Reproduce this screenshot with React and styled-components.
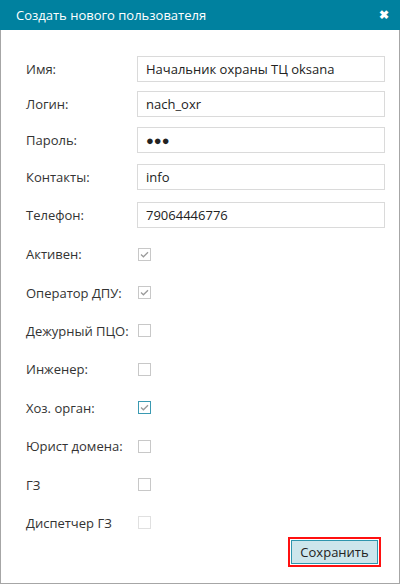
import React from 'react';
import styled, { createGlobalStyle } from 'styled-components';

const GlobalStyle = createGlobalStyle`
  html, body {
    margin: 0;
    padding: 0;
    background: #fff;
  }
  body {
    font-family: "Open Sans", "Noto Sans", sans-serif;
  }
`;

const Dialog = styled.div`
  width: 400px;
  height: 584px;
  box-sizing: border-box;
  display: flex;
  flex-direction: column;
`;

const TitleBar = styled.div`
  height: 30px;
  flex: 0 0 30px;
  background: #00819f;
  color: #fff;
  display: flex;
  align-items: center;
  justify-content: space-between;
  padding: 0 11px 0 16px;
  font-size: 13px;
`;

const Close = styled.span`
  font-size: 12px;
  font-weight: bold;
  line-height: 1;
  cursor: pointer;
`;

const Body = styled.div`
  flex: 1;
  border: 1px solid #a6a6a6;
  border-top: none;
  padding: 22px 15px 0 25px;
  display: flex;
  flex-direction: column;
`;

const Row = styled.div`
  display: grid;
  grid-template-columns: 111px 248px;
  align-items: center;
  height: ${p => p.$height}px;
`;

const Label = styled.label`
  font-size: 13px;
  color: #333;
  white-space: nowrap;
`;

const Input = styled.input`
  box-sizing: border-box;
  height: 26px;
  width: 248px;
  border: 1px solid #dadada;
  padding: 0 8px;
  font-family: inherit;
  font-size: 13px;
  color: #222;
  outline: none;
  background: #fff;
`;

const Box = styled.span`
  display: inline-flex;
  align-items: center;
  justify-content: center;
  width: 13px;
  height: 13px;
  box-sizing: border-box;
  margin-left: 1px;
  border: 1px solid ${p => (p.$accent ? '#3a9ab2' : p.$disabled ? '#e0e0e0' : '#c8c8c8')};
  background: #fff;
`;

const Spacer = styled.div`
  height: 1px;
`;

const Footer = styled.div`
  display: flex;
  justify-content: flex-end;
  padding-right: 6px;
  margin-top: -2px;
`;

const SaveButton = styled.button`
  width: 87px;
  height: 24px;
  border: 1px solid #2e95ad;
  background: #cde6ec;
  color: #222;
  font-family: inherit;
  font-size: 13px;
  outline: 2px solid #ff1010;
  outline-offset: 1px;
  padding: 0;
  cursor: pointer;
`;

const Check = () => (
  <svg width="9" height="7" viewBox="0 0 9 7">
    <path d="M1 3.6 L3.4 5.8 L8 1.2" fill="none" stroke="#9a9a9a" strokeWidth="1.3" />
  </svg>
);

const textFields = [
  { label: 'Имя:', value: 'Начальник охраны ТЦ oksana', h: 34 },
  { label: 'Логин:', value: 'nach_oxr', h: 36 },
  { label: 'Пароль:', value: '●●●', h: 36 },
  { label: 'Контакты:', value: 'info', h: 37 },
  { label: 'Телефон:', value: '79064446776', h: 39 },
];

const flags = [
  { label: 'Активен:', checked: true },
  { label: 'Оператор ДПУ:', checked: true },
  { label: 'Дежурный ПЦО:' },
  { label: 'Инженер:' },
  { label: 'Хоз. орган:', checked: true, accent: true },
  { label: 'Юрист домена:' },
  { label: 'ГЗ' },
  { label: 'Диспетчер ГЗ', disabled: true },
];

export default function App() {
  return (
    <>
      <GlobalStyle />
      <Dialog>
        <TitleBar>
          <span>Создать нового пользователя</span>
          <Close>✖</Close>
        </TitleBar>
        <Body>
          {textFields.map(f => (
            <Row key={f.label} $height={f.h}>
              <Label>{f.label}</Label>
              <Input readOnly value={f.value} />
            </Row>
          ))}
          <Spacer />
          {flags.map(f => (
            <Row key={f.label} $height={38.4}>
              <Label>{f.label}</Label>
              <Box $accent={f.accent} $disabled={f.disabled}>
                {f.checked && <Check />}
              </Box>
            </Row>
          ))}
          <Footer>
            <SaveButton>Сохранить</SaveButton>
          </Footer>
        </Body>
      </Dialog>
    </>
  );
}
